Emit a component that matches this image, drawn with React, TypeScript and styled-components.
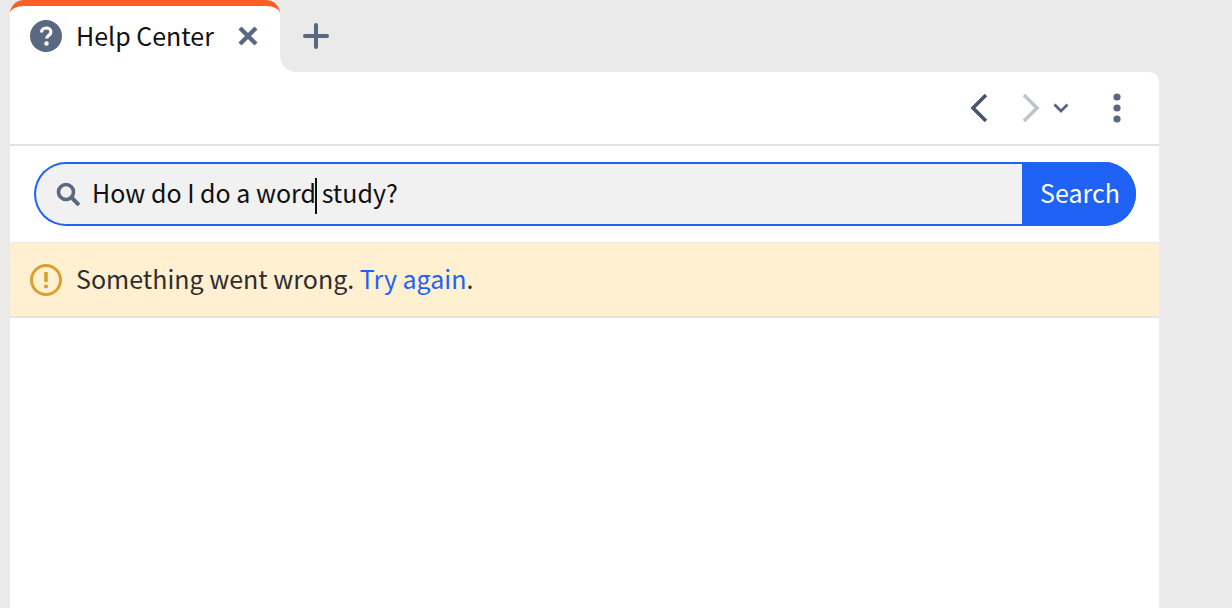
import styled, { createGlobalStyle } from "styled-components"

const GlobalStyle = createGlobalStyle`
    html, body {
        margin: 0;
        height: 100%;
        overflow: hidden;
        background: #eaeaea;
        font-family: "Noto Sans CJK SC", "Noto Sans", sans-serif;
    }
`
const Page = styled.div`
    width: 1149px;
    height: 608px;
    margin-left: 10px;
    display: flex;
    flex-direction: column;
`
const TabStrip = styled.div`
    height: 72px;
    flex: none;
    display: flex;
`
const Tab = styled.div`
    width: 270px;
    flex: none;
    box-sizing: border-box;
    padding: 6px 0 0 20px;
    display: flex;
    align-items: flex-start;
    background: #fff;
    border-top: 6px solid #ff5f24;
    border-radius: 14px 14px 0 0;
`
const TabTitle = styled.span`
    font-size: 25px;
    line-height: 47px;
    color: #111;
    margin-left: 14px;
    width: 162px;
`
const TabCorner = styled.div`
    flex: 1;
    background: #fff;
`
const TabRest = styled.div`
    height: 100%;
    background: #eaeaea;
    border-bottom-left-radius: 16px;
    box-sizing: border-box;
    padding: 18px 0 0 23px;
`
const Toolbar = styled.div`
    height: 74px;
    flex: none;
    box-sizing: border-box;
    background: #fff;
    border-top-right-radius: 9px;
    border-bottom: 2px solid #e2e2e2;
    display: flex;
    align-items: center;
    justify-content: flex-end;
    padding-right: 37px;
`
const SearchArea = styled.div`
    height: 96px;
    flex: none;
    background: #fff;
    padding: 16px 23px 16px 24px;
    box-sizing: border-box;
`
const SearchBox = styled.div`
    height: 64px;
    display: flex;
    border-radius: 32px;
    overflow: hidden;
    background: #1f62f5;
`
const Query = styled.div`
    flex: 1;
    display: flex;
    align-items: center;
    margin: 2px 0 2px 2px;
    padding-left: 20px;
    border-radius: 30px 0 0 30px;
    background: #f1f1f1;
    font-size: 25px;
    color: #111;
`
const QueryText = styled.span`
    margin-left: 12px;
    white-space: pre;
`
const Caret = styled.span`
    display: inline-block;
    width: 2px;
    height: 36px;
    margin-right: -1px;
    margin-left: -1px;
    background: #111;
    vertical-align: middle;
`
const SearchButton = styled.button`
    width: 114px;
    border: 0;
    padding: 0 0 5px 2px;
    background: #1f62f5;
    color: #fff;
    font: inherit;
    font-size: 25px;
`
const Banner = styled.div`
    height: 76px;
    flex: none;
    box-sizing: border-box;
    background: #fff0d2;
    border-top: 1px solid #e9e9e9;
    border-bottom: 2px solid #e4e4e0;
    display: flex;
    align-items: center;
    padding: 0 0 0 20px;
    font-size: 25px;
    color: #2e2e2e;
`
const BannerText = styled.span`
    margin: -3px 0 0 14px;
`
const Link = styled.a`
    color: #1f62f5;
`
const Body = styled.div`
    flex: 1;
    background: #fff;
`
const NavIcon = styled.svg<{ $gap?: number }>`
    display: block;
    flex: none;
    margin-left: ${(p) => p.$gap ?? 0}px;
`

export default function App() {
    return (
        <Page>
            <GlobalStyle />
            <TabStrip>
                <Tab>
                    <NavIcon width="32" height="48" viewBox="0 0 32 48">
                        <circle cx="16" cy="24" r="16" fill="#5a6882" />
                        <path d="M11.5 20.5c0-2.8 2-4.5 4.8-4.5 2.7 0 4.6 1.6 4.6 4 0 3.5-4.3 3.6-4.3 6.6" fill="none" stroke="#fff" strokeWidth="3.2" />
                        <circle cx="16.5" cy="31.5" r="2.2" fill="#fff" />
                    </NavIcon>
                    <TabTitle>Help Center</TabTitle>
                    <NavIcon width="20" height="48" viewBox="0 0 20 48">
                        <path d="M2 16l16 16M18 16L2 32" fill="none" stroke="#5a6882" strokeWidth="4.4" />
                    </NavIcon>
                </Tab>
                <TabCorner>
                    <TabRest>
                        <NavIcon width="26" height="36" viewBox="0 0 26 36">
                            <path d="M13 7v22M2 18h22" fill="none" stroke="#5a6882" strokeWidth="4" strokeLinecap="round" />
                        </NavIcon>
                    </TabRest>
                </TabCorner>
            </TabStrip>
            <Toolbar>
                <NavIcon width="18" height="30" viewBox="0 0 18 30">
                    <path d="M16 2L3 15l13 13" fill="none" stroke="#47546c" strokeWidth="3.6" />
                </NavIcon>
                <NavIcon $gap={34} width="18" height="30" viewBox="0 0 18 30">
                    <path d="M2 2l13 13L2 28" fill="none" stroke="#bfc3cb" strokeWidth="3.6" />
                </NavIcon>
                <NavIcon $gap={13} width="16" height="10" viewBox="0 0 16 10">
                    <path d="M1.5 1.5L8 8l6.5-6.5" fill="none" stroke="#56657f" strokeWidth="2.8" />
                </NavIcon>
                <NavIcon $gap={43} width="10" height="30" viewBox="0 0 10 30">
                    <circle cx="5" cy="4" r="3.6" fill="#5a6882" />
                    <circle cx="5" cy="15" r="3.6" fill="#5a6882" />
                    <circle cx="5" cy="26" r="3.6" fill="#5a6882" />
                </NavIcon>
            </Toolbar>
            <SearchArea>
                <SearchBox>
                    <Query>
                        <NavIcon width="24" height="24" viewBox="0 0 24 24">
                            <circle cx="10" cy="10" r="7.5" fill="none" stroke="#5a6882" strokeWidth="3.6" />
                            <path d="M15.5 15.5L23 23" fill="none" stroke="#5a6882" strokeWidth="4" />
                        </NavIcon>
                        <QueryText>How do I do a word<Caret /> study?</QueryText>
                    </Query>
                    <SearchButton>Search</SearchButton>
                </SearchBox>
            </SearchArea>
            <Banner>
                <NavIcon width="32" height="32" viewBox="0 0 32 32">
                    <circle cx="16" cy="16" r="14.5" fill="none" stroke="#d9a02e" strokeWidth="3" />
                    <path d="M16 8v10" stroke="#d9a02e" strokeWidth="3.6" />
                    <circle cx="16" cy="22.5" r="2.1" fill="#d9a02e" />
                </NavIcon>
                <BannerText>Something went wrong. <Link>Try again</Link>.</BannerText>
            </Banner>
            <Body />
        </Page>
    )
}
